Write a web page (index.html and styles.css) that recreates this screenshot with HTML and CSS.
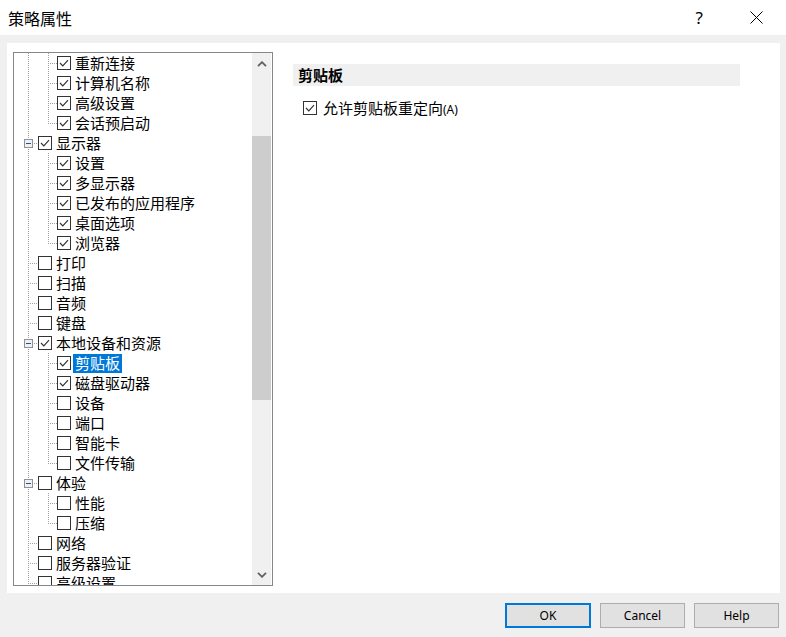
FILE: index.html
```html
<!DOCTYPE html>
<html lang="zh-CN">
<head>
<meta charset="utf-8">
<title>策略属性</title>
<link rel="stylesheet" href="styles.css">
</head>
<body>
<div class="titlebar">
  <span class="title">策略属性</span>
  <span class="help-q">?</span>
  <svg class="close-x" width="13" height="13" viewBox="0 0 13 13"><path d="M0.5 0.5 L12.5 12.5 M12.5 0.5 L0.5 12.5" stroke="#000" stroke-width="1" fill="none"/></svg>
</div>
<div class="main">
  <div class="panel">
    <div class="treebox">
      <div class="tree">
        <div class="row"><span class="g v"></span><span class="g2 t"></span><span class="cb"><svg width="12" height="12" viewBox="0 0 12 12"><polyline points="2,6 4.8,8.8 10,3.2" fill="none" stroke="#333" stroke-width="1.2"/></svg></span><span class="lbl">重新连接</span></div>
        <div class="row"><span class="g v"></span><span class="g2 t"></span><span class="cb"><svg width="12" height="12" viewBox="0 0 12 12"><polyline points="2,6 4.8,8.8 10,3.2" fill="none" stroke="#333" stroke-width="1.2"/></svg></span><span class="lbl">计算机名称</span></div>
        <div class="row"><span class="g v"></span><span class="g2 t"></span><span class="cb"><svg width="12" height="12" viewBox="0 0 12 12"><polyline points="2,6 4.8,8.8 10,3.2" fill="none" stroke="#333" stroke-width="1.2"/></svg></span><span class="lbl">高级设置</span></div>
        <div class="row"><span class="g v"></span><span class="g2 l"></span><span class="cb"><svg width="12" height="12" viewBox="0 0 12 12"><polyline points="2,6 4.8,8.8 10,3.2" fill="none" stroke="#333" stroke-width="1.2"/></svg></span><span class="lbl">会话预启动</span></div>

        <div class="row"><span class="g t"><svg class="exp" width="9" height="9" viewBox="0 0 9 9"><rect x="0.5" y="0.5" width="8" height="8" fill="#eef0f4" stroke="#919191"/><line x1="2" y1="4.5" x2="7" y2="4.5" stroke="#2d4f8f"/></svg></span><span class="cb"><svg width="12" height="12" viewBox="0 0 12 12"><polyline points="2,6 4.8,8.8 10,3.2" fill="none" stroke="#333" stroke-width="1.2"/></svg></span><span class="lbl">显示器</span></div>
        <div class="row"><span class="g v"></span><span class="g2 t"></span><span class="cb"><svg width="12" height="12" viewBox="0 0 12 12"><polyline points="2,6 4.8,8.8 10,3.2" fill="none" stroke="#333" stroke-width="1.2"/></svg></span><span class="lbl">设置</span></div>
        <div class="row"><span class="g v"></span><span class="g2 t"></span><span class="cb"><svg width="12" height="12" viewBox="0 0 12 12"><polyline points="2,6 4.8,8.8 10,3.2" fill="none" stroke="#333" stroke-width="1.2"/></svg></span><span class="lbl">多显示器</span></div>
        <div class="row"><span class="g v"></span><span class="g2 t"></span><span class="cb"><svg width="12" height="12" viewBox="0 0 12 12"><polyline points="2,6 4.8,8.8 10,3.2" fill="none" stroke="#333" stroke-width="1.2"/></svg></span><span class="lbl">已发布的应用程序</span></div>
        <div class="row"><span class="g v"></span><span class="g2 t"></span><span class="cb"><svg width="12" height="12" viewBox="0 0 12 12"><polyline points="2,6 4.8,8.8 10,3.2" fill="none" stroke="#333" stroke-width="1.2"/></svg></span><span class="lbl">桌面选项</span></div>
        <div class="row"><span class="g v"></span><span class="g2 l"></span><span class="cb"><svg width="12" height="12" viewBox="0 0 12 12"><polyline points="2,6 4.8,8.8 10,3.2" fill="none" stroke="#333" stroke-width="1.2"/></svg></span><span class="lbl">浏览器</span></div>

        <div class="row"><span class="g t"></span><span class="cb"></span><span class="lbl">打印</span></div>
        <div class="row"><span class="g t"></span><span class="cb"></span><span class="lbl">扫描</span></div>
        <div class="row"><span class="g t"></span><span class="cb"></span><span class="lbl">音频</span></div>
        <div class="row"><span class="g t"></span><span class="cb"></span><span class="lbl">键盘</span></div>

        <div class="row"><span class="g t"><svg class="exp" width="9" height="9" viewBox="0 0 9 9"><rect x="0.5" y="0.5" width="8" height="8" fill="#eef0f4" stroke="#919191"/><line x1="2" y1="4.5" x2="7" y2="4.5" stroke="#2d4f8f"/></svg></span><span class="cb"><svg width="12" height="12" viewBox="0 0 12 12"><polyline points="2,6 4.8,8.8 10,3.2" fill="none" stroke="#333" stroke-width="1.2"/></svg></span><span class="lbl">本地设备和资源</span></div>
        <div class="row"><span class="g v"></span><span class="g2 t"></span><span class="cb"><svg width="12" height="12" viewBox="0 0 12 12"><polyline points="2,6 4.8,8.8 10,3.2" fill="none" stroke="#333" stroke-width="1.2"/></svg></span><span class="lbl sel">剪贴板</span></div>
        <div class="row"><span class="g v"></span><span class="g2 t"></span><span class="cb"><svg width="12" height="12" viewBox="0 0 12 12"><polyline points="2,6 4.8,8.8 10,3.2" fill="none" stroke="#333" stroke-width="1.2"/></svg></span><span class="lbl">磁盘驱动器</span></div>
        <div class="row"><span class="g v"></span><span class="g2 t"></span><span class="cb"></span><span class="lbl">设备</span></div>
        <div class="row"><span class="g v"></span><span class="g2 t"></span><span class="cb"></span><span class="lbl">端口</span></div>
        <div class="row"><span class="g v"></span><span class="g2 t"></span><span class="cb"></span><span class="lbl">智能卡</span></div>
        <div class="row"><span class="g v"></span><span class="g2 l"></span><span class="cb"></span><span class="lbl">文件传输</span></div>

        <div class="row"><span class="g t"><svg class="exp" width="9" height="9" viewBox="0 0 9 9"><rect x="0.5" y="0.5" width="8" height="8" fill="#eef0f4" stroke="#919191"/><line x1="2" y1="4.5" x2="7" y2="4.5" stroke="#2d4f8f"/></svg></span><span class="cb"></span><span class="lbl">体验</span></div>
        <div class="row"><span class="g v"></span><span class="g2 t"></span><span class="cb"></span><span class="lbl">性能</span></div>
        <div class="row"><span class="g v"></span><span class="g2 l"></span><span class="cb"></span><span class="lbl">压缩</span></div>

        <div class="row"><span class="g t"></span><span class="cb"></span><span class="lbl">网络</span></div>
        <div class="row"><span class="g t"></span><span class="cb"></span><span class="lbl">服务器验证</span></div>
        <div class="row"><span class="g l"></span><span class="cb"></span><span class="lbl">高级设置</span></div>
      </div>
      <div class="scrollbar">
        <div class="sb-btn"><svg width="10" height="6" viewBox="0 0 10 6"><polyline points="1,5.2 5,1.2 9,5.2" fill="none" stroke="#606060" stroke-width="1.8"/></svg></div>
        <div class="sb-track"><div class="sb-thumb"></div></div>
        <div class="sb-btn"><svg width="10" height="6" viewBox="0 0 10 6"><polyline points="1,0.8 5,4.8 9,0.8" fill="none" stroke="#606060" stroke-width="1.8"/></svg></div>
      </div>
    </div>
    <div class="props">
      <div class="props-head">剪贴板</div>
      <div class="props-row">
        <span class="cb"><svg width="12" height="12" viewBox="0 0 12 12"><polyline points="2,6 4.8,8.8 10,3.2" fill="none" stroke="#333" stroke-width="1.2"/></svg></span>
        <span class="props-lbl">允许剪贴板重定向<span class="acc">(A)</span></span>
      </div>
    </div>
  </div>
  <div class="footer">
    <button class="btn btn-default">OK</button>
    <button class="btn">Cancel</button>
    <button class="btn">Help</button>
  </div>
</div>
</body>
</html>
```
FILE: styles.css
```css
* { box-sizing: border-box; }
html, body {
  margin: 0;
  padding: 0;
}
body {
  width: 786px;
  height: 637px;
  overflow: hidden;
  background: #f0f0f0;
  font-family: "Noto Sans CJK SC", "Noto Sans", sans-serif;
  color: #000;
}
.titlebar {
  height: 35px;
  background: #fff;
  display: flex;
  align-items: center;
  padding-left: 8px;
}
.title {
  font-size: 16px;
  line-height: 20px;
  flex: 1;
}
.help-q {
  font-family: "Noto Sans", sans-serif;
  font-size: 17px;
  line-height: 20px;
  margin-right: 47px;
}
.close-x {
  margin-right: 23px;
  display: block;
}
.main {
  height: 602px;
  padding: 8px 6px 0 7px;
}
.panel {
  height: 550px;
  background: #fff;
  display: flex;
  align-items: flex-start;
  padding: 9px 0 0 6px;
}
.treebox {
  width: 260px;
  height: 534px;
  border: 1px solid #828790;
  display: flex;
  background: #fff;
}
.tree {
  flex: 1;
  overflow: hidden;
  padding-left: 4px;
}
.row {
  height: 20px;
  display: flex;
  align-items: center;
  white-space: nowrap;
  font-size: 15px;
}
.g, .g2 {
  height: 20px;
  flex-shrink: 0;
  display: flex;
  align-items: center;
  justify-content: center;
}
.g { width: 20px; }
.g2 { width: 19px; }
.v {
  background: repeating-linear-gradient(to bottom, #a0a0a0 0 1px, transparent 1px 2px) 10px 0 / 1px 100% no-repeat;
}
.t {
  background:
    repeating-linear-gradient(to bottom, #a0a0a0 0 1px, transparent 1px 2px) 10px 0 / 1px 100% no-repeat,
    repeating-linear-gradient(to right, #a0a0a0 0 1px, transparent 1px 2px) 10px 10px / 10px 1px no-repeat;
}
.l {
  background:
    repeating-linear-gradient(to bottom, #a0a0a0 0 1px, transparent 1px 2px) 10px 0 / 1px 11px no-repeat,
    repeating-linear-gradient(to right, #a0a0a0 0 1px, transparent 1px 2px) 10px 10px / 10px 1px no-repeat;
}
.exp {
  display: block;
  margin-left: 1px;
}
.cb {
  width: 14px;
  height: 14px;
  flex-shrink: 0;
  border: 1px solid #333;
  background: #fff;
  display: flex;
  align-items: center;
  justify-content: center;
}
.cb svg { display: block; }
.lbl {
  margin-left: 2px;
  padding: 0 2px;
  line-height: 18px;
  height: 19px;
}
.lbl.sel {
  background: #0078d7;
  color: #fff;
}
.scrollbar {
  width: 19px;
  margin-right: 1px;
  background: #f0f0f0;
  display: flex;
  flex-direction: column;
}
.sb-btn {
  height: 21px;
  display: flex;
  align-items: center;
  justify-content: center;
}
.sb-btn svg { display: block; }
.sb-track {
  flex: 1;
  padding-top: 62px;
}
.sb-thumb {
  height: 264px;
  background: #cdcdcd;
}
.props {
  margin-left: 20px;
  margin-top: 12px;
}
.props-head {
  width: 447px;
  height: 22px;
  background: #f0f0f0;
  padding-left: 5px;
  font-size: 15px;
  font-weight: bold;
  line-height: 21px;
}
.props-row {
  margin-top: 12px;
  height: 20px;
  display: flex;
  align-items: center;
  padding-left: 10px;
}
.props-lbl {
  margin-left: 6px;
  font-size: 15px;
  line-height: 19px;
}
.acc {
  font-family: "Noto Sans", sans-serif;
  font-size: 12px;
}
.footer {
  display: flex;
  justify-content: flex-end;
  gap: 9px;
  padding-top: 10px;
  padding-right: 1px;
}
.btn {
  width: 85px;
  height: 25px;
  background: #e1e1e1;
  border: 1px solid #adadad;
  font-family: "Noto Sans", sans-serif;
  font-size: 12px;
  color: #000;
  padding: 0;
  margin: 0;
}
.btn-default {
  border: 2px solid #0078d7;
  width: 86px;
}
```
